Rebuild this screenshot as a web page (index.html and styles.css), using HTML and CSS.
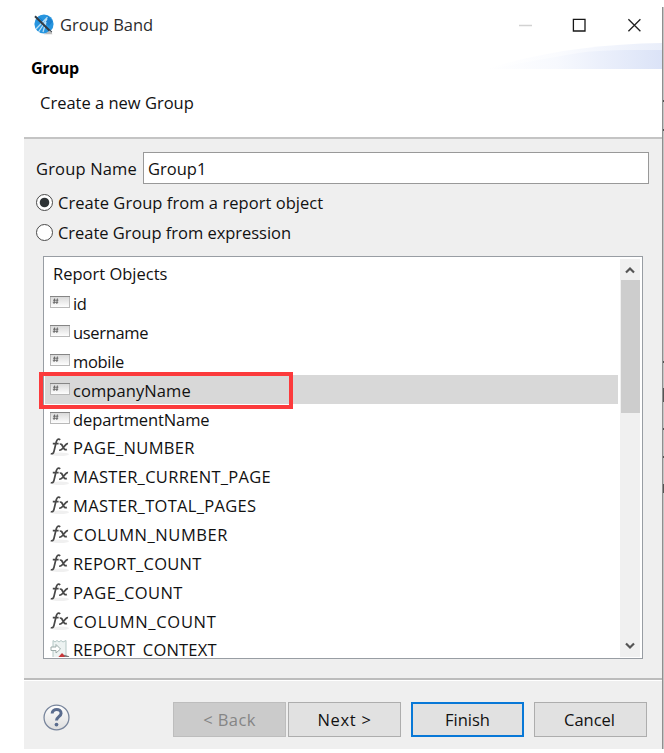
FILE: index.html
```
<!DOCTYPE html>
<html lang="en">
<head>
<meta charset="utf-8">
<title>Group Band</title>
<link rel="stylesheet" href="styles.css">
</head>
<body>
<svg class="defs" width="0" height="0" aria-hidden="true">
  <defs>
    <linearGradient id="field-fill" x1="0" y1="0" x2="0" y2="1"><stop offset="0" stop-color="#d8d8d8"/><stop offset="1" stop-color="#fff"/></linearGradient>
    <symbol id="field" viewBox="0 0 20 12">
      <rect x=".5" y=".5" width="19" height="11" fill="url(#field-fill)" stroke="#b9b9b9"/>
      <path d="M0 .5H20" stroke="#858585"/>
      <path d="M4.6 2.5 4 8M7.4 2.5 6.8 8M3 4.2H8.4M2.8 6.3H8.2" stroke="#606060" stroke-width=".9"/>
    </symbol>
    <symbol id="fx" viewBox="0 0 20 20">
      <ellipse cx="10" cy="17.3" rx="9" ry="1.8" fill="#f0f0f0"/>
      <path d="M10.2 2.8C8.7 1.3 7 2 6.3 4.8L4 14.2C3.5 16.4 2.3 17.3.8 16.4M2.8 6.6H8.6" fill="none" stroke="#484848" stroke-width="1.7"/>
      <path d="M9.8 7.4C12.6 5.2 13 14.4 16.8 12.4M18 6.7C15.2 6 12.6 13.8 9.2 13.2" fill="none" stroke="#484848" stroke-width="1.8"/>
    </symbol>
  </defs>
</svg>
<div class="screen">
  <main class="dialog">
    <header class="head">
      <div class="titlebar">
        <svg class="logo" viewBox="0 0 20 21">
          <circle cx="10" cy="10" r="9.6" fill="#2795df"/>
          <path d="M4 1.6 9 9 14 2 18.8 7.4 15 12 18 15" fill="#1b80ce"/>
          <path d="M2 15 13.5 3.2M4.5 18 13 5M9 18 12 8" stroke="#b9dff5" stroke-width="1.3"/>
          <path d="M1 2.2 17.5 18.5" stroke="#333a42" stroke-width="2"/>
          <path d="M10 20.2 18.5 20.2 16 16.5" fill="#bbb"/>
        </svg>
        <span class="t title">Group Band</span>
        <svg class="controls" viewBox="0 0 124 16" fill="none">
          <path d="M0 8.5H13" stroke="#d2d2d2" stroke-width="1.5"/>
          <path d="M54.4 2.4H66V14H54.4Z" stroke="#171717" stroke-width="1.3"/>
          <path d="M109.4 2.2 121.4 14.2M121.4 2.2 109.4 14.2" stroke="#222" stroke-width="1.3"/>
        </svg>
      </div>
      <div class="intro">
        <svg class="swoosh" viewBox="0 0 176 26" preserveAspectRatio="none">
          <defs><linearGradient id="sweep"><stop offset="0" stop-color="#fff"/><stop offset=".4" stop-color="#f7f9fe"/><stop offset="1" stop-color="#dbe3f7"/></linearGradient></defs>
          <path d="M0 26C55 9 112 1 176 0V26Z" fill="url(#sweep)" opacity=".6"/>
          <path d="M0 26C35 21 85 10 105 8.5C130 6.5 152 7 176 7V26Z" fill="url(#sweep)"/>
        </svg>
        <h1 class="t heading">Group</h1>
        <p class="t sub">Create a new Group</p>
      </div>
    </header>
    <section class="body">
      <div class="name-row"><label class="t name-label">Group Name</label><div class="input"><span class="t value">Group1</span></div></div>
      <div class="radio"><i class="dot on"></i><span class="t opt-a">Create Group from a report object</span></div>
      <div class="radio"><i class="dot"></i><span class="t opt-b">Create Group from expression</span></div>
      <div class="list">
        <div class="rows">
          <div class="row top"><span class="t">Report Objects</span></div>
          <div class="row"><svg class="field"><use href="#field"/></svg><span class="t tight">id</span></div>
          <div class="row"><svg class="field"><use href="#field"/></svg><span class="t tight">username</span></div>
          <div class="row"><svg class="field"><use href="#field"/></svg><span class="t tight">mobile</span></div>
          <div class="row selected"><svg class="field"><use href="#field"/></svg><span class="t r4">companyName</span><i class="marker"></i></div>
          <div class="row"><svg class="field"><use href="#field"/></svg><span class="t r5">departmentName</span></div>
          <div class="row"><svg class="fx"><use href="#fx"/></svg><span class="t r6">PAGE_NUMBER</span></div>
          <div class="row"><svg class="fx"><use href="#fx"/></svg><span class="t r7">MASTER_CURRENT_PAGE</span></div>
          <div class="row"><svg class="fx"><use href="#fx"/></svg><span class="t r8">MASTER_TOTAL_PAGES</span></div>
          <div class="row"><svg class="fx"><use href="#fx"/></svg><span class="t r9">COLUMN_NUMBER</span></div>
          <div class="row"><svg class="fx"><use href="#fx"/></svg><span class="t r10">REPORT_COUNT</span></div>
          <div class="row"><svg class="fx"><use href="#fx"/></svg><span class="t r11">PAGE_COUNT</span></div>
          <div class="row"><svg class="fx"><use href="#fx"/></svg><span class="t r12">COLUMN_COUNT</span></div>
          <div class="row"><svg class="param" viewBox="0 0 20 20">
            <path d="M3 19V1.5L5 3 7 1.5 9 3 11 1.5 13 3 16 1.5V19Z" fill="#edf3f2" stroke="#b4c7c5"/>
            <path d="M1 8H6V5.5L10.5 10 6 14V11.5H1Z" fill="#fff" stroke="#9dacaa"/>
            <path d="M7.5 19 12 14 17 19Z" fill="#c8373a"/><path d="M14 16.5 19 18" stroke="#777" stroke-width="1.5"/>
          </svg><span class="t r13">REPORT_CONTEXT</span></div>
        </div>
        <div class="scroll">
          <svg class="arrow" viewBox="0 0 10 8"><path d="M1 6.5 5 2.5 9 6.5" fill="none" stroke="#555" stroke-width="2.2"/></svg>
          <div class="thumb"></div>
          <svg class="arrow down" viewBox="0 0 10 8"><path d="M1 1.5 5 5.5 9 1.5" fill="none" stroke="#555" stroke-width="2.2"/></svg>
        </div>
      </div>
    </section>
    <footer class="foot">
      <svg class="help" viewBox="0 0 26 26"><defs><linearGradient id="ball" x1="0" y1="0" x2="0" y2="1"><stop offset="0" stop-color="#fff"/><stop offset="1" stop-color="#dedede"/></linearGradient></defs><circle cx="13" cy="13" r="12" fill="url(#ball)" stroke="#77849b" stroke-width="1.2"/><path d="M8.8 9.2C9 3.8 17.5 4 17.4 9C17.3 12.2 13 12.3 13 16" fill="none" stroke="#5a6c8e" stroke-width="2.9"/><circle cx="13" cy="19.8" r="1.8" fill="#5a6c8e"/></svg>
      <div class="buttons">
        <div class="btn disabled"><span class="t b1">&lt; Back</span></div>
        <div class="btn"><span class="t b2">Next &gt;</span></div>
        <div class="btn primary"><span class="t">Finish</span></div>
        <div class="btn"><span class="t b4">Cancel</span></div>
      </div>
    </footer>
  </main>
  <aside class="edge"><i class="e1"></i><i class="e2"></i><i class="e3"></i><i class="e4"></i><i class="e5"></i><i class="e5"></i><i class="e6"></i></aside>
</div>
</body>
</html>
```
FILE: styles.css
```
* { box-sizing: border-box; }
body { margin: 0; background: #fff; font: 16.5px/22px "Open Sans", "Noto Sans", sans-serif; color: #111; overflow: hidden; }
.defs { position: absolute; }
.screen { display: flex; height: 742px; margin: 7px 0 4px 24px; }
.dialog { width: 638px; display: flex; flex-direction: column; background: #efefef; }
.t { display: inline-block; white-space: nowrap; }
.head { height: 132px; background: #fff; border-bottom: 2px solid #c4c4c4; }
.titlebar { height: 36px; display: flex; align-items: center; padding: 0 20px 0 10px; }
.logo { width: 20px; height: 21px; margin-top: -1px; }
.title { margin: -1px 0 0 6px; color: #2c2c2c; }
.controls { width: 124px; height: 16px; margin: -1px -1px 0 auto; }
.intro { position: relative; padding: 14px 0 0 7px; }
.swoosh { position: absolute; right: 0; top: 0; width: 176px; height: 26px; }
h1, p { margin: 0; }
.heading { display: block; font-size: 16px; font-weight: 700; color: #000; letter-spacing: -.3px; }
.sub { display: block; margin: 13px 0 0 9px; }
.body { height: 539px; padding: 13px 13px 0 12px; }
.name-row { display: flex; height: 32px; align-items: center; justify-content: space-between; }
.name-label { letter-spacing: .17px; padding-top: 2px; }
.input { width: 506px; height: 32px; border: 1.5px solid #999; background: #fff; padding: 5px 4px 0; }
.radio { height: 30px; display: flex; align-items: center; gap: 5px; }
.name-row + .radio { margin-top: 4px; }
.opt-a { letter-spacing: .05px; }
.opt-b { letter-spacing: -.03px; }
.dot { width: 17px; height: 17px; margin-top: -2px; border: 1.5px solid #4a4a4a; border-radius: 50%; background: #fff; }
.dot.on { background: radial-gradient(circle, #2e3335 0 4.3px, #fff 5.2px); }
.list { margin: 8px 6px 0 7px; height: 403px; border: 1px solid #989da3; background: #fff; display: flex; padding: 2px 2px 1px 1px; }
.rows { flex: 1; height: 398px; padding-top: 1px; min-width: 0; display: flex; flex-direction: column; clip-path: inset(-4px 0 0 -6px); }
.row { height: 28.85px; flex: none; display: flex; align-items: center; padding: 2px 0 0 5px; gap: 3px; }
.row.top { padding: 0 0 0 8px; }
.selected { background: #d8d8d8; position: relative; }
.marker { position: absolute; left: -6px; top: -3px; width: 254px; height: 37px; border: 4px solid #fc3a3c; }
.field { width: 20px; height: 12px; margin-top: -4px; }
.fx, .param { width: 20px; height: 20px; margin-top: -2px; }
.tight { letter-spacing: -.32px; }
.r4 { letter-spacing: .08px; }
.r5 { letter-spacing: -.1px; }
.r6 { letter-spacing: .35px; }
.r7, .r8 { letter-spacing: .31px; }
.r9 { letter-spacing: .57px; }
.r10 { letter-spacing: .27px; }
.r11 { letter-spacing: .43px; }
.r12 { letter-spacing: .7px; }
.r13 { letter-spacing: .18px; }
.scroll { width: 20px; margin-left: 2px; background: #f0f0f0; display: flex; flex-direction: column; align-items: center; }
.arrow { width: 10px; height: 8px; margin: 7px 0 6px; }
.thumb { width: 19px; height: 133px; background: #cdcdcd; }
.down { margin: auto 0 7px; }
.foot { flex: 1; border-top: 2px solid #bcbcbc; box-shadow: inset 0 1px #fff; display: flex; padding: 0 15px 0 19px; }
.help { width: 27px; height: 27px; margin-top: 24px; }
.buttons { display: flex; margin: 22px 0 0 auto; }
.btn { width: 113px; height: 35px; border: 1px solid #adadad; background: #e1e1e1; display: flex; align-items: center; justify-content: center; margin-left: 2px; padding-top: 1px; }
.btn.disabled { background: #cbcbcb; border-color: #bdbdbd; color: #858585; }
.btn.primary { border: 2px solid #0878d7; margin-left: 10px; }
.btn.primary + .btn { margin-left: 10px; }
.b1 { letter-spacing: .4px; }
.b2 { letter-spacing: .7px; }
.b4 { padding-right: 2px; }
.edge { width: 2px; background: linear-gradient(90deg, #8f8f8f 50%, #c4c4c4 50%); display: flex; flex-direction: column; align-items: flex-end; }
.edge i { width: 1px; height: 2px; background: #555; }
.e1 { margin-top: 93px; }
.e2 { margin-top: 27px; }
.e3 { margin-top: 230px; }
.edge .e4 { margin-top: 25px; height: 14px; }
.e5 { margin-top: 26px; }
.edge .e6 { margin-top: 26px; height: 9px; }
```
